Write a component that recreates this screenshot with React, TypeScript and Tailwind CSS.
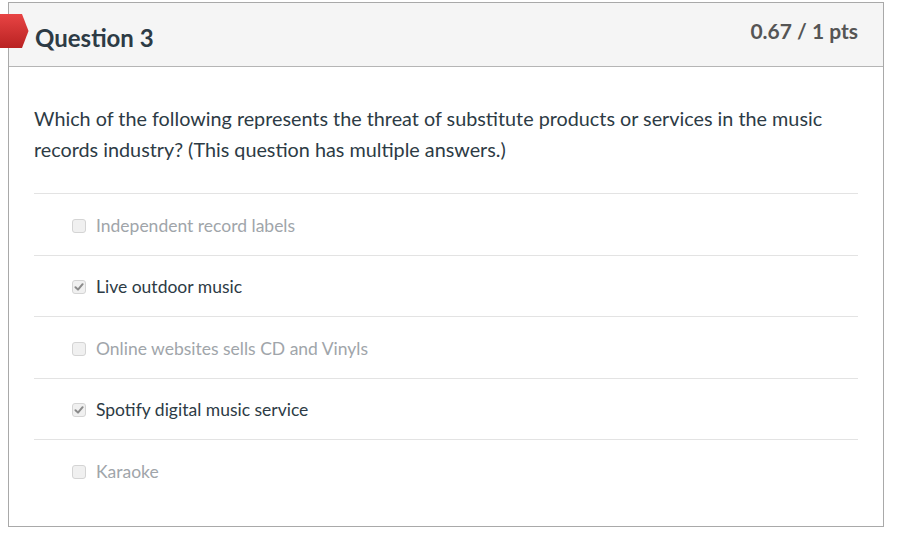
import React from "react";

const options = [
  { label: "Independent record labels", checked: false },
  { label: "Live outdoor music", checked: true },
  { label: "Online websites sells CD and Vinyls", checked: false },
  { label: "Spotify digital music service", checked: true },
  { label: "Karaoke", checked: false },
];

function Box({ checked }: { checked: boolean }) {
  return (
    <span className="flex h-[14px] w-[14px] shrink-0 items-center justify-center rounded-[3px] border border-[#d4d4d4] bg-[#f0f0f0]">
      {checked && (
        <svg width="10" height="10" viewBox="0 0 10 10">
          <path d="M1.5 5.2 L4 7.6 L8.6 2.2" fill="none" stroke="#8a8a8a" strokeWidth="2" strokeLinecap="round" strokeLinejoin="round" />
        </svg>
      )}
    </span>
  );
}

export default function App() {
  return (
    <div className="relative h-[536px] w-[900px] bg-white pt-[2px] pl-2" style={{ fontFamily: "Lato, 'Open Sans', sans-serif" }}>
      <div className="w-[876px] h-[525px] border border-[#a9a9a9] bg-white">
        <div className="flex h-[64px] items-start justify-between border-b border-[#b5b5b5] bg-[#f5f5f5] pl-[26px] pr-[25px]">
          <h2 className="mt-[18px] text-[24px] font-bold leading-[34px] text-[#2d3b45]">Question 3</h2>
          <div className="mt-[11px] text-[21px] font-bold leading-[34px] text-[#555]">0.67 / 1 pts</div>
        </div>
        <div className="px-[25px] pt-[36px]">
          <p className="text-[19.8px] leading-[31px] text-[#2d3b45]">
            Which of the following represents the threat of substitute products or services in the music records industry? (This question has multiple answers.)
          </p>
          <div className="mt-[28px]">
            {options.map((o) => (
              <div
                key={o.label}
                className="flex h-[61.5px] items-center gap-[10px] border-t border-[#e3e3e3] pl-[38px] pt-[3px]"
              >
                <Box checked={o.checked} />
                <span className={`text-[17.5px] ${o.checked ? "text-[#2d3b45]" : "text-[#a0a5aa]"}`}>{o.label}</span>
              </div>
            ))}
          </div>
        </div>
      </div>
      <svg className="absolute left-0 top-[14px]" width="29" height="34" viewBox="0 0 29 34">
        <defs>
          <linearGradient id="fl" x1="0" y1="0" x2="0" y2="1">
            <stop offset="0" stopColor="#e84444" />
            <stop offset="1" stopColor="#b92222" />
          </linearGradient>
        </defs>
        <polygon points="0,0 22,0 28.5,17 22,34 0,34" fill="url(#fl)" />
      </svg>
    </div>
  );
}
